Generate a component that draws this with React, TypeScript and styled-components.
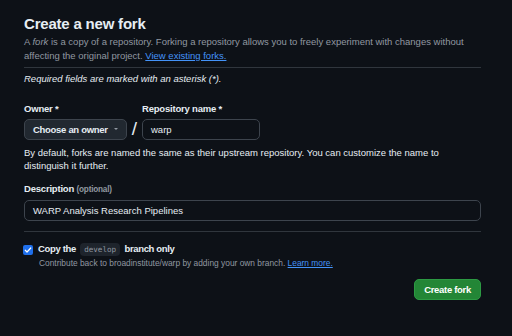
import React from 'react'
import styled, { createGlobalStyle } from 'styled-components'

const GlobalStyle = createGlobalStyle`
  html, body {
    margin: 0;
    padding: 0;
    background: #0d1117;
    height: 100%;
  }
  body {
    font-family: "Liberation Sans", Arial, sans-serif;
    color: #e6edf3;
    -webkit-font-smoothing: antialiased;
  }
`

const Page = styled.main`
  width: 457px;
  padding: 13px 0 0 24px;
`

const Title = styled.h1`
  margin: 0;
  font-size: 15px;
  line-height: 22px;
  font-weight: 700;
  letter-spacing: -0.2px;
`

const Lead = styled.p`
  margin: 0;
  font-size: 9.5px;
  line-height: 13.5px;
  color: #9198a1;
`

const Link = styled.a`
  color: #4493f8;
  text-decoration: underline;
`

const Divider = styled.hr`
  margin: ${({ $top }: { $top: number }) => $top}px 0 0;
  border: 0;
  border-top: 1px solid #30363d;
`

const Note = styled.p`
  margin: 4px 0 0;
  font-size: 9.5px;
  line-height: 13.5px;
  font-style: italic;
`

const Row = styled.div`
  display: flex;
  align-items: flex-end;
  margin-top: 17px;
`

const Field = styled.div`
  display: flex;
  flex-direction: column;
  gap: 4px;
`

const Label = styled.label`
  font-size: 9.5px;
  line-height: 12px;
  font-weight: 700;
  letter-spacing: -0.2px;
`

const Optional = styled.span`
  font-size: 8.2px;
  color: #9198a1;
`

const Select = styled.button`
  display: flex;
  align-items: center;
  height: 21px;
  width: 103px;
  padding: 0 0 0 8px;
  box-sizing: border-box;
  background: #212830;
  border: 1px solid #3d444d;
  border-radius: 5px;
  color: #e6edf3;
  font-family: inherit;
  font-size: 9.5px;
  font-weight: 700;
  letter-spacing: -0.3px;
  white-space: nowrap;
`

const Caret = styled.span`
  width: 0;
  height: 0;
  border-left: 2.5px solid transparent;
  border-right: 2.5px solid transparent;
  border-top: 2.5px solid #9198a1;
  margin-left: auto;
  margin-right: 8px;
`

const Slash = styled.span`
  width: 15px;
  text-align: center;
  font-size: 19px;
  line-height: 21px;
  color: #e6edf3;
  transform: translateY(-1px);
`

const Input = styled.div`
  display: flex;
  align-items: center;
  height: 21px;
  box-sizing: border-box;
  width: ${({ $w }: { $w: number }) => $w}px;
  padding: 0 8px;
  background: #0d1117;
  border: 1px solid #3d444d;
  border-radius: 5px;
  font-size: 9.5px;
  white-space: nowrap;
`

const Help = styled.p`
  margin: 6px 0 0;
  max-width: 425px;
  font-size: 9.5px;
  line-height: 13.5px;
`

const Block = styled.div`
  margin-top: 10px;
  display: flex;
  flex-direction: column;
  gap: 4px;
`

const CheckRow = styled.div`
  display: flex;
  align-items: center;
  gap: 5px;
  height: 14px;
  margin-top: 11px;
`

const Box = styled.span`
  display: flex;
  align-items: center;
  justify-content: center;
  width: 10px;
  height: 10px;
  border-radius: 2px;
  background: #1f6feb;
  margin-left: -1px;
`

const CheckText = styled.span`
  font-size: 9.5px;
  font-weight: 700;
  letter-spacing: -0.35px;
`

const Code = styled.code`
  display: inline-block;
  font-family: "DejaVu Sans Mono", "Liberation Mono", monospace;
  font-size: 7.6px;
  font-weight: 400;
  line-height: 13px;
  padding: 0 4px;
  border-radius: 4px;
  background: #1e242c;
  color: #9198a1;
  margin: 0 2px;
  letter-spacing: 0;
`

const Sub = styled.p`
  margin: 0 0 0 15px;
  font-size: 8.4px;
  line-height: 12px;
  color: #9198a1;
`

const Actions = styled.div`
  display: flex;
  justify-content: flex-end;
  margin-top: 10px;
`

const Primary = styled.button`
  height: 21px;
  padding: 0 9px;
  background: #238636;
  border: 1px solid #2c9a43;
  border-radius: 5px;
  color: #ffffff;
  font-family: inherit;
  font-size: 9.5px;
  font-weight: 700;
  letter-spacing: -0.3px;
`

export default function App() {
  return (
    <Page>
      <GlobalStyle />
      <Title>Create a new fork</Title>
      <Lead>
        A <em>fork</em> is a copy of a repository. Forking a repository allows you to freely
        experiment with changes without affecting the original project.{' '}
        <Link>View existing forks.</Link>
      </Lead>
      <Divider $top={5} />
      <Note>Required fields are marked with an asterisk (*).</Note>
      <Row>
        <Field>
          <Label>Owner *</Label>
          <Select>
            Choose an owner
            <Caret />
          </Select>
        </Field>
        <Slash>/</Slash>
        <Field>
          <Label>Repository name *</Label>
          <Input $w={118}>warp</Input>
        </Field>
      </Row>
      <Help>
        By default, forks are named the same as their upstream repository. You can customize the
        name to distinguish it further.
      </Help>
      <Block>
        <Label>
          Description <Optional>(optional)</Optional>
        </Label>
        <Input $w={457}>WARP Analysis Research Pipelines</Input>
      </Block>
      <Divider $top={10} />
      <CheckRow>
        <Box>
          <svg width="8" height="8" viewBox="0 0 16 16" fill="none">
            <path d="M2.5 8.5l3.5 3.5 7.5-8" stroke="#fff" strokeWidth="2.4" strokeLinecap="round" strokeLinejoin="round" />
          </svg>
        </Box>
        <CheckText>
          Copy the <Code>develop</Code> branch only
        </CheckText>
      </CheckRow>
      <Sub>
        Contribute back to broadinstitute/warp by adding your own branch. <Link>Learn more.</Link>
      </Sub>
      <Actions>
        <Primary>Create fork</Primary>
      </Actions>
    </Page>
  )
}
